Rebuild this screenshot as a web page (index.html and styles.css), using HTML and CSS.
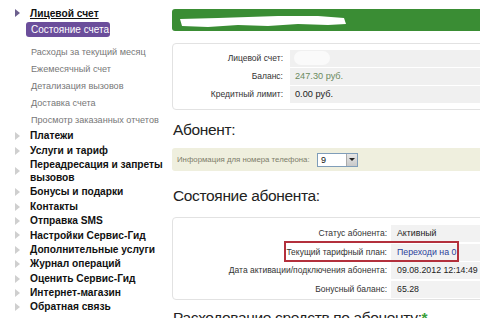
FILE: index.html
```html
<!DOCTYPE html>
<html lang="ru">
<head>
<meta charset="utf-8">
<title>Сервис-Гид</title>
<link rel="stylesheet" href="styles.css">
</head>
<body>
<div class="page">
  <nav class="sidebar">
    <div class="top-item"><span class="tri tri-dark"></span><a class="top-link">Лицевой счет</a></div>
    <div class="pill">Состояние счета</div>
    <ul class="sub">
      <li>Расходы за текущий месяц</li>
      <li>Ежемесячный счет</li>
      <li>Детализация вызовов</li>
      <li>Доставка счета</li>
      <li>Просмотр заказанных отчетов</li>
    </ul>
    <ul class="menu">
      <li><span class="tri"></span><span class="mtext">Платежи</span></li>
      <li><span class="tri"></span><span class="mtext">Услуги и тариф</span></li>
      <li><span class="tri"></span><span class="mtext">Переадресация и запреты вызовов</span></li>
      <li><span class="tri"></span><span class="mtext">Бонусы и подарки</span></li>
      <li><span class="tri"></span><span class="mtext">Контакты</span></li>
      <li><span class="tri"></span><span class="mtext">Отправка SMS</span></li>
      <li><span class="tri"></span><span class="mtext">Настройки Сервис-Гид</span></li>
      <li><span class="tri"></span><span class="mtext">Дополнительные услуги</span></li>
      <li><span class="tri"></span><span class="mtext">Журнал операций</span></li>
      <li><span class="tri"></span><span class="mtext">Оценить Сервис-Гид</span></li>
      <li><span class="tri"></span><span class="mtext">Интернет-магазин</span></li>
      <li><span class="tri"></span><span class="mtext">Обратная связь</span></li>
    </ul>
  </nav>
  <main class="main">
    <div class="greenbar">
      <svg class="scribble" width="170" height="16" viewBox="0 0 170 16">
        <path d="M2 6 L40 5 L70 4 L100 3 L140 3 L166 5 L168 11 L150 12 L120 11 L90 13 L60 12 L30 14 L4 13 Z" fill="#ffffff"/>
      </svg>
    </div>
    <div class="box account">
      <div class="row"><div class="lbl">Лицевой счет:</div><div class="val"><span class="blot"></span></div></div>
      <div class="row"><div class="lbl">Баланс:</div><div class="val green">247.30 руб.</div></div>
      <div class="row"><div class="lbl">Кредитный лимит:</div><div class="val">0.00 руб.</div></div>
    </div>
    <h2 class="heading">Абонент:</h2>
    <div class="infobar">
      <span class="infolbl">Информация для номера телефона:</span>
      <span class="select"><span class="selval">9</span><span class="selbtn"></span></span>
    </div>
    <h2 class="heading h2b">Состояние абонента:</h2>
    <div class="box status">
      <div class="row"><div class="lbl">Статус абонента:</div><div class="val">Активный</div></div>
      <div class="row"><div class="lbl">Текущий тарифный план:</div><div class="val link">Переходи на 0</div></div>
      <div class="row"><div class="lbl">Дата активации/подключения абонента:</div><div class="val">09.08.2012 12:14:49</div></div>
      <div class="row"><div class="lbl">Бонусный баланс:</div><div class="val">65.28</div></div>
      <div class="redmark"></div>
    </div>
    <h2 class="heading h3">Расходование средств по абоненту:<span class="star">*</span></h2>
  </main>
</div>
</body>
</html>
```
FILE: styles.css
```css
html, body {
  margin: 0;
  padding: 0;
  background: #ffffff;
}
body {
  width: 480px;
  height: 318px;
  overflow: hidden;
  font-family: "Liberation Sans", Arial, sans-serif;
  color: #222;
}
.page {
  display: flex;
  align-items: flex-start;
}
.sidebar {
  width: 172px;
  flex: none;
  padding-top: 5px;
}
.top-item {
  display: flex;
  align-items: center;
  height: 16px;
  padding-left: 15px;
}
.tri {
  width: 0;
  height: 0;
  border-top: 4px solid transparent;
  border-bottom: 4px solid transparent;
  border-left: 5px solid #cfcfcf;
  flex: none;
  margin-right: 10px;
}
.tri-dark {
  border-left-color: #6c5f8e;
}
.top-link {
  font-weight: bold;
  font-size: 10.2px;
  color: #111;
  text-decoration: underline;
}
.pill {
  margin: 1px 0 0 26px;
  width: 84px;
  height: 15px;
  box-sizing: border-box;
  background: #6b4e9b;
  color: #fff;
  border-radius: 3px;
  font-size: 10px;
  line-height: 15px;
  padding-left: 5px;
  white-space: nowrap;
}
.sub {
  list-style: none;
  margin: 7px 0 0 31px;
  padding: 0;
}
.sub li {
  font-size: 9.1px;
  color: #777;
  height: 17px;
  line-height: 17px;
  white-space: nowrap;
}
.menu {
  list-style: none;
  margin: 0;
  padding: 0 0 0 15px;
}
.menu li {
  display: flex;
  align-items: center;
  min-height: 14.4px;
}
.mtext {
  font-weight: bold;
  font-size: 10.2px;
  line-height: 13.6px;
  color: #111;
  max-width: 136px;
}
.main {
  width: 330px;
  flex: none;
  padding-top: 9px;
}
.greenbar {
  height: 22px;
  background: #3a8d34;
  border-radius: 3px 0 0 3px;
  display: flex;
  align-items: center;
  padding-left: 6px;
}
.scribble {
  display: block;
  margin-top: 2px;
}
.box {
  border: 1px solid #e2e2e2;
  border-radius: 4px;
  box-sizing: border-box;
  position: relative;
}
.account {
  margin-top: 12px;
  height: 67px;
  padding: 6px 0 0 0;
}
.row {
  display: flex;
  height: 17px;
  margin-bottom: 1px;
}
.lbl {
  width: 117px;
  flex: none;
  text-align: right;
  font-size: 8.5px;
  line-height: 17px;
  color: #333;
  padding-right: 7px;
  box-sizing: border-box;
  white-space: nowrap;
}
.val {
  flex: 1;
  background: #f0f0f0;
  font-size: 9.2px;
  line-height: 17px;
  color: #222;
  padding-left: 5px;
  position: relative;
  white-space: nowrap;
}
.val.green {
  color: #6b8a5e;
}
.blot {
  position: absolute;
  left: 4px;
  top: 1px;
  width: 36px;
  height: 14px;
  border-radius: 7px;
  background: #fafafa;
}
.heading {
  margin: 0;
  font-weight: normal;
  font-size: 15.5px;
  letter-spacing: -0.35px;
  color: #222;
  line-height: 20px;
  padding-left: 1px;
  white-space: nowrap;
}
.account + .heading {
  margin-top: 10px;
}
.infobar {
  margin-top: 8px;
  height: 23px;
  background: #efefde;
  border-radius: 3px 0 0 3px;
  display: flex;
  align-items: center;
  padding-left: 5px;
}
.infolbl {
  font-size: 7.8px;
  color: #7d7d6a;
  width: 140px;
}
.select {
  display: flex;
  width: 41px;
  height: 14px;
  box-sizing: border-box;
  border: 1px solid #7f9db9;
  background: #fff;
}
.selval {
  flex: 1;
  font-size: 9px;
  line-height: 12px;
  padding-left: 3px;
  color: #111;
}
.selbtn {
  width: 10px;
  background: linear-gradient(#e6e6e6, #c9c9c9);
  border-left: 1px solid #aaa;
  position: relative;
}
.selbtn::after {
  content: "";
  position: absolute;
  left: 2px;
  top: 4px;
  border-left: 3px solid transparent;
  border-right: 3px solid transparent;
  border-top: 3px solid #222;
}
.h2b {
  margin-top: 15px;
}
.status {
  margin-top: 11px;
  height: 83px;
  padding-top: 7px;
}
.status .row {
  height: 17px;
  margin-bottom: 1.5px;
}
.status .lbl {
  width: 218px;
  padding-right: 4px;
}
.status .val {
  background: #f2f2f2;
  font-size: 8.8px;
  padding-left: 6px;
}
.val.link {
  color: #2b3f9a;
}
.redmark {
  position: absolute;
  left: 111px;
  top: 23px;
  width: 175px;
  height: 21px;
  border: 2px solid #b3303c;
  box-sizing: border-box;
}
.h3 {
  margin-top: 8px;
}
.star {
  color: #3aa03a;
  font-weight: bold;
}
```
